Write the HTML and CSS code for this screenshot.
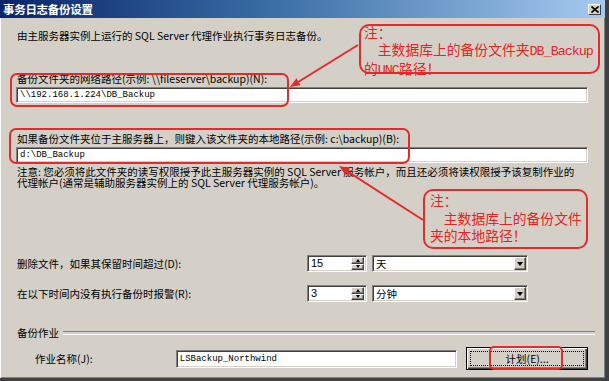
FILE: index.html
```html
<!DOCTYPE html>
<html lang="zh-CN">
<head>
<meta charset="utf-8">
<title>事务日志备份设置</title>
<link rel="stylesheet" href="styles.css">
</head>
<body>
<div class="window">
  <div class="titlebar">
    <span class="title">事务日志备份设置</span>
    <span class="close"><svg width="8" height="7" viewBox="0 0 8 7"><path d="M0.5 0.5 L7.5 6.5 M7.5 0.5 L0.5 6.5" stroke="#000" stroke-width="1.6"/></svg></span>
  </div>
  <div class="content">
    <p class="intro">由主服务器实例上运行的 SQL Server 代理作业执行事务日志备份。</p>
    <div class="field">
      <label class="flabel">备份文件夹的网络路径(示例: \\fileserver\backup)(N):</label>
      <div class="textbox">\\192.168.1.224\DB_Backup</div>
    </div>
    <div class="field">
      <label class="flabel">如果备份文件夹位于主服务器上，则键入该文件夹的本地路径(示例: c:\backup)(B):</label>
      <div class="textbox">d:\DB_Backup</div>
    </div>
    <p class="note">注意: 您必须将此文件夹的读写权限授予此主服务器实例的 SQL Server 服务帐户，而且还必须将读权限授予该复制作业的<br>代理帐户(通常是辅助服务器实例上的 SQL Server 代理服务帐户)。</p>
    <div class="row first">
      <span class="rlabel">删除文件，如果其保留时间超过(D):</span>
      <div class="spin"><span class="val">15</span><span class="spinbtns"><span class="sb"><i class="up"></i></span><span class="sb"><i class="down"></i></span></span></div>
      <div class="combo"><span class="cval">天</span><span class="dd"><i class="ddtri"></i></span></div>
    </div>
    <div class="row second">
      <span class="rlabel">在以下时间内没有执行备份时报警(R):</span>
      <div class="spin"><span class="val">3</span><span class="spinbtns"><span class="sb"><i class="up"></i></span><span class="sb"><i class="down"></i></span></span></div>
      <div class="combo"><span class="cval">分钟</span><span class="dd"><i class="ddtri"></i></span></div>
    </div>
    <div class="group">备份作业</div>
    <div class="jobrow">
      <label class="jlabel">作业名称(J):</label>
      <div class="textbox job">LSBackup_Northwind</div>
      <button class="btn"><span class="focus">计划(E)...</span></button>
    </div>
  </div>

  <div class="hl hl1"></div>
  <div class="hl hl2"></div>
  <div class="hl hl3"></div>
  <div class="ann ann1"><div class="atext">注：<br>　主数据库上的备份文件夹<span class="lat">DB_Backup</span><br>的<span class="lat">UNC</span>路径！</div></div>
  <div class="ann ann2"><div class="atext">注：<br>　主数据库上的备份文件<br>夹的本地路径！</div></div>
  <svg class="arrows" width="609" height="381" viewBox="0 0 609 381">
    <line x1="358" y1="45" x2="298.5" y2="81.75" stroke="#e32b2b" stroke-width="2"/>
    <polygon points="290,87 300.6,85.15 296.4,78.35" fill="#e32b2b"/>
    <line x1="423" y1="220" x2="347.4" y2="171.4" stroke="#e32b2b" stroke-width="2"/>
    <polygon points="339,166 349.57,168.05 345.25,174.77" fill="#e32b2b"/>
  </svg>
</div>
</body>
</html>
```
FILE: styles.css
```css
* { box-sizing: border-box; margin: 0; padding: 0; }
html, body { width: 609px; height: 381px; overflow: hidden; background: #d4d0c8; }
body {
  font-family: "Noto Sans CJK SC", "Liberation Sans", sans-serif;
  font-size: 10.5px;
  color: #000;
}
.window {
  position: relative;
  width: 609px;
  height: 381px;
  background: #d4d0c8;
  border-right: 4px solid #404040;
  border-bottom: 3px solid #404040;
  box-shadow: inset 1px 0 #ffffff, inset -1px -1px #808080;
  display: flex;
  flex-direction: column;
}
.titlebar {
  height: 18px;
  flex: none;
  background: linear-gradient(to right, #0a246a, #3a6ea5 45%, #a6caf0);
  display: flex;
  align-items: center;
  justify-content: space-between;
  padding: 0 4px 0 3px;
}
.title {
  color: #fff;
  font-weight: bold;
  font-size: 11.5px;
  line-height: 18px;
  letter-spacing: -0.3px;
}
.close {
  width: 13px;
  height: 11px;
  background: #d4d0c8;
  border: 1px solid;
  border-color: #fff #404040 #404040 #fff;
  display: flex;
  align-items: center;
  justify-content: center;
}
.content {
  padding: 11px 17px 0 16px;
  display: flex;
  flex-direction: column;
}
.intro { line-height: 14px; padding-left: 1px; white-space: nowrap; }
.field { margin-top: 29px; display: flex; flex-direction: column; }
.flabel { line-height: 14px; padding-left: 1px; white-space: nowrap; }
.textbox {
  margin-top: 1px;
  height: 16px;
  background: #fff;
  border: 1px solid;
  border-color: #808080 #fff #fff #808080;
  box-shadow: inset 1px 1px #404040, inset -1px -1px #d4d0c8;
  font-family: "Liberation Mono", monospace;
  font-size: 9px;
  line-height: 14px;
  padding-left: 3px;
  white-space: nowrap;
}
.note {
  margin-top: 3px;
  font-size: 10.5px;
  line-height: 11px;
  padding-left: 1px;
  white-space: nowrap;
}
.row { display: flex; align-items: center; height: 17px; }
.row.first { margin-top: 67px; }
.row.second { margin-top: 13px; }
.rlabel { width: 291px; padding-left: 1px; line-height: 14px; white-space: nowrap; }
.spin, .combo {
  height: 17px;
  background: #fff;
  border: 1px solid;
  border-color: #808080 #fff #fff #808080;
  box-shadow: inset 1px 1px #404040, inset -1px -1px #d4d0c8;
  display: flex;
  padding: 1px;
}
.spin { width: 60px; }
.combo { width: 156px; margin-left: 5px; }
.val {
  flex: 1;
  font-family: "Liberation Sans", sans-serif;
  font-size: 11px;
  line-height: 13px;
  padding-left: 2px;
}
.cval { flex: 1; line-height: 13px; padding-left: 2px; }
.spinbtns { width: 13px; display: flex; flex-direction: column; margin-right: 1px; }
.sb, .dd {
  flex: 1;
  background: #d4d0c8;
  border: 1px solid;
  border-color: #fff #404040 #404040 #fff;
  box-shadow: inset -1px -1px #808080;
  display: flex;
  align-items: center;
  justify-content: center;
}
.up { width: 0; height: 0; border-left: 2.5px solid transparent; border-right: 2.5px solid transparent; border-bottom: 3px solid #000; }
.down { width: 0; height: 0; border-left: 2.5px solid transparent; border-right: 2.5px solid transparent; border-top: 3px solid #000; }
.dd { flex: none; width: 12px; }
.ddtri { width: 0; height: 0; border-left: 3.5px solid transparent; border-right: 3.5px solid transparent; border-top: 4px solid #000; }
.group {
  margin-top: 24px;
  line-height: 14px;
  padding-left: 1px;
  display: flex;
  align-items: center;
  gap: 4px;
  margin-right: -7px;
  white-space: nowrap;
}
.group::after {
  content: "";
  flex: 1;
  height: 2px;
  border-top: 1px solid #808080;
  border-bottom: 1px solid #fff;
}
.jobrow { margin-top: 7px; height: 23px; display: flex; align-items: center; }
.jlabel { width: 160px; padding-left: 19px; line-height: 14px; white-space: nowrap; }
.textbox.job { margin-top: 0; width: 282px; height: 18px; line-height: 16px; }
.btn {
  margin-left: 9px;
  width: 122px;
  height: 23px;
  background: #d4d0c8;
  border: 1px solid #000;
  box-shadow: inset 1px 1px #fff, inset -1px -1px #404040, inset -2px -2px #808080;
  font: inherit;
  display: flex;
  padding: 3px;
}
.focus {
  flex: 1;
  border: 1px dotted #000;
  display: flex;
  align-items: center;
  justify-content: center;
  line-height: 13px;
}
.hl, .ann {
  position: absolute;
  border: 2px solid #e32b2b;
  pointer-events: none;
}
.hl { border-radius: 7px; }
.hl1 { left: 10px; top: 73px; width: 279px; height: 34px; }
.hl2 { left: 9px; top: 128px; width: 401px; height: 36px; }
.hl3 { left: 489px; top: 346px; width: 74px; height: 24px; border-radius: 5px; }
.ann {
  border-radius: 10px;
  color: #e42424;
  font-size: 13.8px;
  white-space: nowrap;
}
.ann1 { left: 359px; top: 24px; width: 241px; height: 50px; }
.ann1 .atext { margin-top: -2px; padding-left: 3px; line-height: 16.5px; }
.ann2 { left: 423px; top: 189px; width: 165px; height: 60px; }
.ann2 .atext { padding-top: 1px; padding-left: 5px; line-height: 17.5px; }
.lat { font-family: "Liberation Mono", monospace; font-size: 13.4px; letter-spacing: -1px; }
.arrows { position: absolute; left: 0; top: 0; pointer-events: none; }
```
